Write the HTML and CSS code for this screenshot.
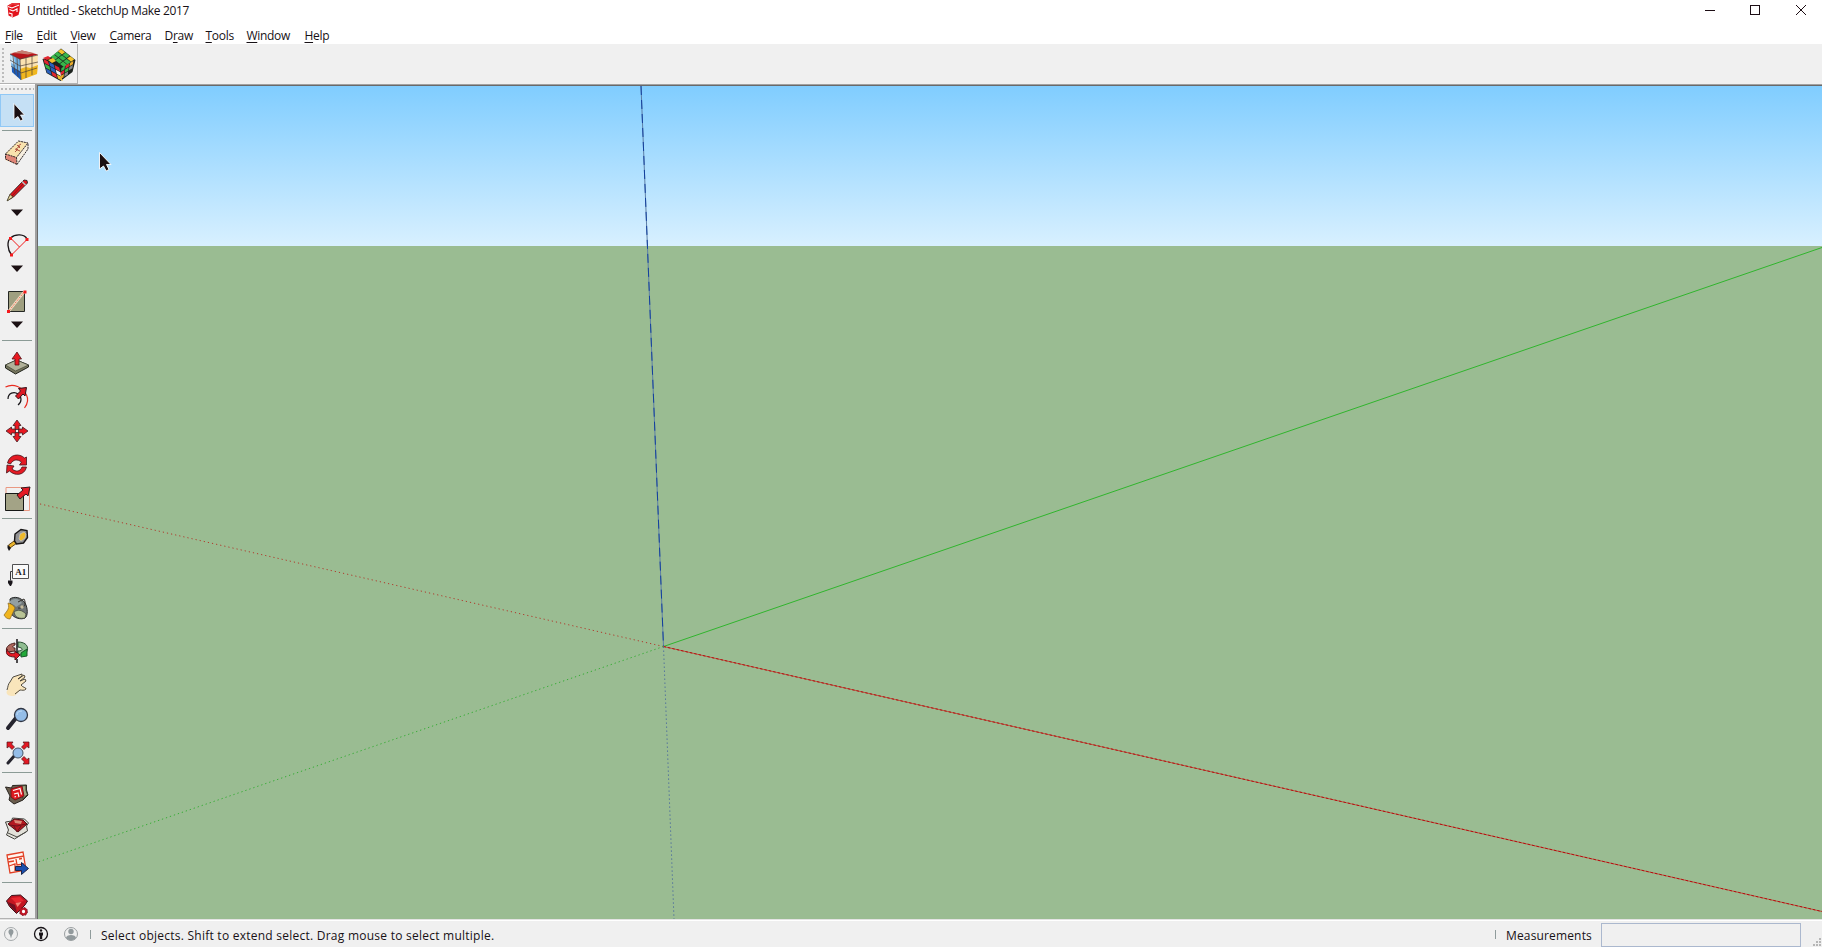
FILE: index.html
```html
<!DOCTYPE html>
<html lang="en">
<head>
<meta charset="utf-8">
<title>Untitled - SketchUp Make 2017</title>
<link rel="stylesheet" href="styles.css">
</head>
<body>
<div class="app">
  <header class="titlebar">
    <svg class="logo" viewBox="7 2 15 16"><path d="M7.500 5.500L12 3.500l8-.5-.5 8-1 4-6 2.500-4-2z" fill="#e2131b"/><path d="M8 6.500l4 1.500 7-3M9.500 9.500l3.500 1.500 4-2v3M9 13l3 1v3" fill="none" stroke="#fff" stroke-width="1.100"/><path d="M8 5.500L12 3l8 .5-3 2-4-1-3 2z" fill="#e8343a"/></svg>
    <span class="title">Untitled - SketchUp Make 2017</span>
    <svg class="winctl" viewBox="1700 0 122 22" shape-rendering="crispEdges"><path d="M1705 10.500h10" stroke="#1c0d14"/><path d="M1750.500 5.500h9v9h-9z" fill="none" stroke="#1c0d14"/><path d="M1796 5l10 10M1806 5l-10 10" stroke="#1c0d14" shape-rendering="auto"/></svg>
  </header>
  <nav class="menubar">
    <span class="m-file"><u>F</u>ile</span><span class="m-edit"><u>E</u>dit</span><span class="m-view"><u>V</u>iew</span><span class="m-camera"><u>C</u>amera</span><span class="m-draw">D<u>r</u>aw</span><span class="m-tools"><u>T</u>ools</span><span class="m-window"><u>W</u>indow</span><span class="m-help"><u>H</u>elp</span>
  </nav>
  <div class="toolbar">
    <div class="plugins">
      <span class="grip-v"></span>
      <svg class="cubes" viewBox="8 46 69 38">
        <g stroke-linejoin="round">
        <path d="M10 54l10 5 1 21-9-8z" fill="#6fb0e4"/><path d="M20 59l18-4-1 19-16 6z" fill="#fbe2b0"/><path d="M10 54l12-3.500 16 4-18 5z" fill="#b8151b"/><path d="M12 53l10-2.500 12 2.500-6 1.500-8-1z" fill="#c57d70"/>
        <path d="M20 69l6-2 4 1 8-3-1 9-16 6z" fill="#f0b71f"/><path d="M10 55l4 2 1 8-4-2z" fill="#c6e3f8"/><path d="M12 67l8 4 1 9-9-8z" fill="#1c5cbd"/>
        <path d="M20 59l1 21M26 58v20M32 56v19M20 66l18-4M21 73l16-5M10 60l10 6M11 66l10 7M13 56l2 18M17 58l1 19M10 54l10 5 18-4" fill="none" stroke="#4e4038" stroke-width=".7"/>
        </g>
        <path d="M61 48.500l14.500 11.500-3 12-12 9-14-8-4-14 9-2z" fill="#1b221d"/>
        <g transform="matrix(4.600 3.600 -3.600 2.700 61 49)" fill="#38b64a"><path d="M0 0h.88v.86H0z" fill="#f3c52d"/><path d="M1 0h.88v.86H1zM0 1h.88v.86H0zM1 1h.88v.86H1zM0 2h.88v.86H0zM1 2h.88v.86H1zM2 1h.88v.86H2zM2 2h.88v.86H2z"/><path d="M2 0h.88v.86H2z" fill="#f3c52d"/></g>
        <g transform="matrix(5.500 3 1.200 4.700 43.500 59)"><path d="M0 0h.85v.86H0zM2 0h.85v.86H2zM1 2h.85v.86H1z" fill="#e32731"/><path d="M1 0h.85v.86H1zM1 1h.85v.86H1zM0 2h.85v.86H0z" fill="#2b60bd"/><path d="M0 1h.85v.86H0z" fill="#38b64a"/><path d="M2 1h.85v.86H2z" fill="#f5f5f5"/><path d="M2 2h.85v.86H2z" fill="#f3bf2d"/></g>
        <g transform="matrix(4.200 -2.500 -.500 4 61.500 68)"><path d="M0 0h.82v.82H0zM1 1h.82v.82H1z" fill="#38b64a"/><path d="M1 0h.82v.82H1zM0 1h.82v.82H0z" fill="#e32731"/><path d="M2 0h.82v.82H2zM0 2h.82v.82H0z" fill="#e9aa2b"/><path d="M2 1h.82v.82H2zM1 2h.82v.82H1z" fill="#898c91"/></g>
        <path d="M43 58l5-2 3 2-4 2z" fill="#e32731"/><path d="M48 60l5-2 3 3-4 2z" fill="#f3bf2d"/>
      </svg>
    </div>
  </div>
  <main class="workspace">
    <aside class="tools">
      <span class="grip-h"></span>
      <div class="tool active"><svg viewBox="1 95 32 31"><path d="M14 103.500v16l4-3 2.500 4.500 2.500-1.500-2.500-4.500h4z" fill="#1b1013" stroke="#fff" stroke-width=".8"/></svg></div>
      <hr>
      <svg class="tool first" viewBox="0 136 34 34"><path d="M18.500 141l9.500 2-11 21.500-11.500-4.500.5-7z" fill="#f9e3ae"/><path d="M5.500 154l11 3.500.5 7-11.500-5z" fill="#e08577"/><path d="M28 143v6l-11 15.500-.5-7z" fill="#f6eedf"/><path d="M18.500 141l9.500 2v6l-11 15.500-11.500-5.500v-5zM5.500 154l11 3.500L28 143M16.500 157.500l.5 7" fill="none" stroke="#30282b" stroke-dasharray="2 .7"/><path d="M15 152l3-3M16 149l4-3M18 146l3-2M15 149l5 2M17 145l3 3" stroke="#a74435" stroke-width=".9"/></svg>
      <svg class="tool split" viewBox="0 170 34 56"><path d="M7.500 200.500l2.500-6L24 180l3 .5.500 2.500-14 14z" fill="#dd141b" stroke="#2c2023" stroke-width=".9"/><path d="M7 201l3-6.500 3 2.500z" fill="#e8d9a0" stroke="#414127" stroke-width=".7"/><path d="M22 181.500l3.500 3.500" stroke="#b9c2c2" stroke-width="1.500"/><path d="M12 196l11-12" stroke="#8e111b"/><path class="drop" d="M11 209.500h12L17 216z"/></svg>
      <svg class="tool split" viewBox="0 226 34 56"><path d="M11.500 255C7 249 7 241 10.500 238c5-4.500 14-4 16.500 1" fill="none" stroke="#171215" stroke-width="1.300"/><path d="M11.500 255L27 239.500M10.500 238l9 9" stroke="#f01b1b" fill="none"/><path d="M9 237h3v3H9zM25.500 238h3v3h-3zM10 253.500h3v3h-3z" fill="#f41a1d"/><path class="drop" d="M11 265.500h12L17 272z"/></svg>
      <svg class="tool split last" viewBox="0 282 34 55"><path d="M8.500 291.500h16v20h-16z" fill="#9f9f80" stroke="#242724"/><path d="M8.500 311.500l16-20" stroke="#f3ddc5" stroke-width="2.500"/><path d="M8.500 311.500l16-20" stroke="#e45435" stroke-dasharray="1 1.200"/><path d="M7 310h3v3H7zM23.500 290.500h3v3h-3z" fill="#f41a1d"/><path class="drop" d="M11 321.500h12L17 328z"/></svg>
      <hr>
      <svg class="tool first" viewBox="0 346 34 34"><path d="M5.500 365l11-5 12 5v2l-13 7-10-6z" fill="#77765e" stroke="#20231c"/><path d="M5.500 365l11-5 12 5-13 6z" fill="#b1b199" stroke="#33372a" stroke-width=".6"/><path d="M15 365v-6h-3l5-7 4.500 7H19v6z" fill="#e91921" stroke="#541317" stroke-width=".8"/></svg>
      <svg class="tool" viewBox="0 380 34 34"><path d="M5.500 387c8-4 17 0 21 8 2 4 1 9-2 13" fill="none" stroke="#e92b20" stroke-width="1.200"/><path d="M8 399c0-6 6-8 10-5 4 3 4 8 0 11" fill="none" stroke="#171518" stroke-width="1.200"/><path d="M15.500 396l5-5-2-2.500 8-1-1.500 8.500-2-2-4.500 5z" fill="#dc1a24" stroke="#321016"/></svg>
      <svg class="tool" viewBox="0 414 34 34"><path d="M17 420l4 5.500h-2v4h-4v-4h-2zM17 442l4-5.500h-2v-4h-4v4h-2zM6 431l5.500-4v2h4v4h-4v2zM28 431l-5.500-4v2h-4v4h4v2z" fill="#e81821" stroke="#422024" stroke-width=".8"/></svg>
      <svg class="tool" viewBox="0 448 34 34"><path d="M7.500 463c2-9 12-10 17-5l2-1v8h-7l2-3c-4-3-8-3-11 2zM26.500 467c-2 9-12 9-17 4l-3 2 .5-8 7 1-2 3c4 3 8 3 10-2z" fill="#e51a23" stroke="#43151b" stroke-width=".8"/></svg>
      <svg class="tool last" viewBox="0 482 34 35"><path d="M6 487.500h23.500v23H6z" fill="none" stroke="#e99882"/><path d="M5.500 493.500h18v17h-18z" fill="#a3a386" stroke="#151715"/><path d="M17 495l6-5-2-2 9-1-2 9-2-2-6 5z" fill="#e51b25" stroke="#34191d"/></svg>
      <hr>
      <svg class="tool first" viewBox="0 524 34 34"><path d="M8.500 545l7-5 1.500 3-7 5z" fill="#e9b42c" stroke="#654713"/><path d="M15 534l6-4.500 6 1 .5 7-4 5.500-7 1-2-3z" fill="#929294" stroke="#171515" stroke-width="1.400"/><path d="M20 534l4-2 2 2-1 4-4 3-2-2z" fill="#efb92a" stroke="#c9c9c4" stroke-width=".7"/><path d="M7.500 545l3.500 3-2 3-1.500-3z" fill="#171517"/></svg>
      <svg class="tool" viewBox="0 558 34 34"><path d="M12.500 564.500h16v14h-16z" fill="#fafafa" stroke="#505052"/><path d="M12 571.500h-1.500v9" fill="none" stroke="#39383a"/><path d="M8 580.500h4.500V583l-1.500 3h-1L8 583z" fill="#19151a"/><text x="15.200" y="575" class="label">A1</text></svg>
      <svg class="tool last" viewBox="0 592 34 35"><path d="M10 599c4-3 11-2 15 4 3 5 3 13 0 15-4 2-12 0-14-5z" fill="#6f7576" stroke="#242626"/><path d="M9 602c4-4 10-4 13 1l-6 4c-2-3-5-3-7-5z" fill="#939fa2"/><path d="M14 612c4-3 8-2 12 2l-1 4c-5 1-10 0-11-6z" fill="#b8c395" stroke="#394035" stroke-width=".7"/><path d="M8 603c4 1 6 3 7 5l-5 11c-3 0-5-2-6-4l3-4c2-3 2-4 1-8z" fill="#f0b51f" stroke="#8a681f" stroke-width=".7"/><path d="M18 602l6-3c3 5 0 10-6 9" fill="none" stroke="#35312c"/><circle cx="22" cy="607" r="1.700" fill="#c7bc9c"/></svg>
      <hr>
      <svg class="tool first" viewBox="0 634 34 34"><path d="M18 642c8 0 12 5 8 11l-8 3v-5c5 0 6-3 0-4z" fill="#8fbd91" stroke="#284e31"/><path d="M15 643c-7 1-10 5-8 9l8-1v-3c-3 0-3-2 0-3z" fill="#ae675c" stroke="#4d2420"/><path d="M7 649c1 4 4 5 8 4v-2l5 4-5 5v-3c-7 0-10-3-8-8z" fill="#e31822" stroke="#581319"/><path d="M27 649v7l-6 1v-4z" fill="#21aa38" stroke="#195529"/><path d="M17 639v14M17 659v4" stroke="#171417" stroke-width="1.500"/></svg>
      <svg class="tool" viewBox="0 668 34 34"><path d="M6.500 692c2-3 1-6 3-9l4-6 3-1 6-2v2l-4 3 6-4 1 2-5 4 5-2 1 2-5 4c2 3 5 2 5 4-2 2-4 1-6 1-4 4-5 6-8 6-3 0-6-1-6-4z" fill="#f9e5bb"/><path d="M7 690c1-3 1-6 3-8l3-5 3-1 6-2v2l-4 3 6-4 1 2-5 4 5-2 1 2-5 4c2 3 5 2 5 4-2 2-4 1-6 1l-5 4" fill="none" stroke="#3d3930" stroke-width=".9"/></svg>
      <svg class="tool" viewBox="0 702 34 34"><path d="M8 728l8-10" stroke="#25242e" stroke-width="4" stroke-linecap="round"/><circle cx="21" cy="715" r="6.500" fill="#94bde8" stroke="#303644" stroke-width="1.300"/><path d="M17 715c0-3 2-4 5-4" fill="none" stroke="#bfdcf5"/></svg>
      <svg class="tool last" viewBox="0 736 34 35"><path d="M8 763l7-8" stroke="#25242e" stroke-width="3" stroke-linecap="round"/><path d="M7 742h6l-1.500 2 3 3-2.500 2.500-3-3L7 748zM29 742h-6l1.500 2-3 3 2.500 2.500 3-3 2 1.500zM29 764h-6l1.500-2-3-3 2.500-2.500 3 3 2-1.500z" fill="#e31822" stroke="#4c151a" stroke-width=".7"/><circle cx="18" cy="753" r="5" fill="#94bde8" stroke="#455568"/></svg>
      <hr>
      <svg class="tool first" viewBox="0 778 34 34"><path d="M5.500 787l6 1 1-2.500 14-.5v5l1.500 5-5 5-9 4-5-4 1-4z" fill="#695d4d" stroke="#28231f"/><path d="M20 786l6-.5v5l1.500 4-4.500 4z" fill="#a1aa84" stroke="#373b2c"/><path d="M11 789l11-3 2 10-9 4-4-3z" fill="#dd1920" stroke="#76161a"/><path d="M13 790.500l7-2 1.500 6M14 794l4-1 1 4M14.500 797l1.500-.5" fill="none" stroke="#fff" stroke-width="1.100"/></svg>
      <svg class="tool" viewBox="0 812 34 34"><path d="M5.500 822l6-1 1-3 12 1 4 4-2 3 1 5-13 8-8-4 2-5z" fill="#e2e1d9" stroke="#454540"/><path d="M8 824l6-5 9 1 4 4-9 8z" fill="#b41820" stroke="#501117"/><path d="M14 820l8 1-1 3-6-1z" fill="#d98c79"/><path d="M9 825l8 1 9-2M14 826l3 6 4-6" fill="none" stroke="#6d131a"/><path d="M8 833l9 4 9-5" fill="none" stroke="#4c4c47"/></svg>
      <svg class="tool last" viewBox="0 846 34 35"><path d="M7 855l16-3 3 18-16 3z" fill="#fff5ef" stroke="#e14025" stroke-width="1.300"/><path d="M8 859l16-3M8 862l6-1M16 859l1 6 7-1M9 866l6-2v7M19 859l3-.5" fill="none" stroke="#e14025" stroke-width="1.300"/><path d="M15.500 866.500h6v-4l7 6-7 6v-4h-6z" fill="#1b4fae" stroke="#18264b"/></svg>
      <hr>
      <svg class="tool first gem" viewBox="0 888 34 31"><path d="M6.500 901l5-5.500 9-.5 7 6-2.500 4-8.500 8.500-7-7z" fill="#c31621" stroke="#38121a"/><path d="M8 902l7 3 2 8-7-7z" fill="#701021"/><path d="M11 898l9-1 4 4-8 2z" fill="#e92730"/><path d="M15.500 903l6-1-4 5z" fill="#f28174"/><circle cx="23.500" cy="911.500" r="2.800" fill="#fff" stroke="#be1726" stroke-width="2.300"/><circle cx="23.500" cy="911.500" r="4" fill="none" stroke="#68131e" stroke-dasharray="1.400 1.740"/></svg>
    </aside>
    <div class="frame">
    <svg class="viewport" viewBox="38 86 1784 833" preserveAspectRatio="none">
      <defs><linearGradient id="sky" x1="0" y1="0" x2="0" y2="1"><stop offset="0" stop-color="#80cdff"/><stop offset="1" stop-color="#d8f0ff"/></linearGradient></defs>
      <rect x="38" y="86" width="1784" height="160" fill="url(#sky)"/>
      <rect x="38" y="246" width="1784" height="673" fill="#9abc92"/>
      <g fill="none" stroke-width="1">
        <path d="M641 86L663.500 646.500" stroke="#5d7fa6"/>
        <path d="M641 86L663.500 646.500" stroke="#123f9d" stroke-dasharray="9 5"/>
        <path d="M663.500 646.500L1822 247.500" stroke="#30b52d"/>
        <path d="M663.500 646.500L1822 911.500" stroke="#b9583f"/>
        <path d="M663.500 646.500L1822 911.500" stroke="#b30d12" stroke-dasharray="2.500 2"/>
        <path d="M663.500 646.500L38 503.500" stroke="#b03a2c" stroke-dasharray="1.200 3"/>
        <path d="M663.500 646.500L38 862" stroke="#36ad35" stroke-dasharray="1.300 2.900"/>
        <path d="M663.500 646.500L674 919" stroke="#54749c" stroke-dasharray="1.500 2.500"/>
      </g>
      <path d="M99.500 152.500v16.500l4-3 2.700 5 2.800-1.500-2.500-5h4.500z" fill="#1b1013" stroke="#fff" stroke-width=".9"/>
    </svg>
    </div>
  </main>
  <footer class="status">
    <svg class="status-icons" viewBox="0 921 96 26"><g fill="none"><circle cx="11" cy="934" r="6.500" stroke="#a6aaac"/><circle cx="41" cy="934" r="6.500" stroke="#171317" stroke-width="1.300"/><circle cx="71" cy="934" r="6.500" stroke="#9a9fa1"/></g><path d="M11 938.500l-1-3.500c-3-3-1-6 1-6s4 3 1 6z" fill="#929a9d"/><circle cx="41" cy="930.500" r="1.200" fill="#171317"/><path d="M39 932.500h4v3h-.8v3.500h-2.400v-3.500H39z" fill="#171317"/><circle cx="71" cy="931.500" r="2.700" fill="#929a9d"/><path d="M66 938c0-4 10-4 10 0-2 3-8 3-10 0z" fill="#929a9d"/><path d="M90.500 930v9" stroke="#8f9b9b"/></svg>
    <span class="hint">Select objects. Shift to extend select. Drag mouse to select multiple.</span>
    <span class="tick"></span>
    <span class="measure">Measurements</span>
    <input class="value" type="text" aria-label="Measurements">
    <svg class="resize" viewBox="0 0 8 8"><path d="M6 0h2v2H6zM3 3h2v2H3zM6 3h2v2H6zM0 6h2v2H0zM3 6h2v2H3zM6 6h2v2H6z" fill="#b6b6b6"/></svg>
  </footer>
</div>
</body>
</html>
```
FILE: styles.css
```css
* { box-sizing: border-box; }
body { margin: 0; overflow: hidden; font: 12px/16px "Open Sans", "Noto Sans", sans-serif; color: #171116; }
svg { display: block; flex: none; }
.app { width: 1822px; height: 947px; display: flex; flex-direction: column; background: #f0f0f0; }
.titlebar { height: 22px; background: #fff; display: flex; align-items: flex-start; padding-left: 7px; }
.logo { width: 15px; height: 16px; margin-top: 2px; }
.title { margin: 3px auto 0 5px; letter-spacing: -.35px; white-space: nowrap; }
.winctl { width: 122px; height: 22px; }
.menubar { height: 22px; background: #fff; display: flex; padding: 6px 0 0 5px; letter-spacing: -.3px; }
.menubar u { text-underline-offset: 2px; text-decoration-thickness: 1px; text-decoration-skip-ink: none; }
.m-file { width: 31.5px; }
.m-edit { width: 34px; }
.m-view { width: 39px; }
.m-camera { width: 55px; }
.m-draw, .m-tools { width: 41px; }
.m-window { width: 58px; }
.toolbar { height: 40px; background: #f0f0f0; }
.plugins { width: 78px; height: 40px; display: flex; align-items: flex-start; padding: 0 0 0 2px; border-right: 1px solid #b2b2b2; border-bottom: 1px solid #b2b2b2; }
.grip-v { width: 2px; height: 34px; margin: 4px 4px 0 0; background: repeating-linear-gradient(#bcbcbc 0 2px, transparent 2px 4px); }
.cubes { width: 69px; height: 38px; margin-top: 2px; }
.workspace { height: 835px; flex: none; display: flex; }
.tools { width: 35px; height: 835px; flex: none; display: flex; flex-direction: column; background: #f0f0f0; border-top: 1px solid #fff; border-bottom: 1px solid #b2b2b2; }
.grip-h { width: 33px; height: 2px; flex: none; margin: 3px 0 4px 1px; background: repeating-linear-gradient(90deg, #b8b8b8 0 2px, transparent 2px 4px); }
.tool { width: 34px; height: 34px; flex: none; }
.tool.active { height: 33px; background: #c5e0f5; border: 1px solid #90c8f6; margin-bottom: 3px; }
.active svg { width: 32px; height: 31px; }
.tool.split { height: 56px; }
.tool.last { height: 35px; }
.tool.split.last { height: 55px; margin-bottom: 2px; }
.tool.gem { height: 31px; }
.tools hr { width: 30px; height: 1px; flex: none; border: 0; margin: 0 0 0 2px; background: #8b9b96; }
.tool.last + hr { margin-top: 1px; }
.tool.first { margin-top: 5px; }
.drop { fill: #1b1013; }
.label { font: bold 9px "Liberation Serif", serif; fill: #202022; }
.frame { width: 1787px; height: 835px; border-left: 2px solid #a0a0a0; border-top: 1px solid #a0a0a0; }
.viewport { width: 1785px; height: 834px; border-left: 1px solid #696969; border-top: 1px solid #696969; }
.status { height: 28px; display: flex; align-items: flex-start; border-top: 1px solid #e3e3e3; background: #f0f0f0; box-shadow: inset 0 1px #fff; }
.status-icons { width: 96px; height: 26px; margin-top: 1px; }
.hint { margin: 8px auto 0 5px; white-space: nowrap; letter-spacing: .245px; }
.tick { width: 1px; height: 9px; margin: 10px 10px 0 0; background: #8f9b9b; }
.measure { width: 95px; margin-top: 8px; letter-spacing: .15px; }
.value { width: 200px; height: 24px; margin: 3px 12px 0 0; border: 1px solid #abb8ce; background: #f0f0f0; }
.resize { width: 8px; height: 8px; margin-top: 18px; margin-right: 1px; }
```
